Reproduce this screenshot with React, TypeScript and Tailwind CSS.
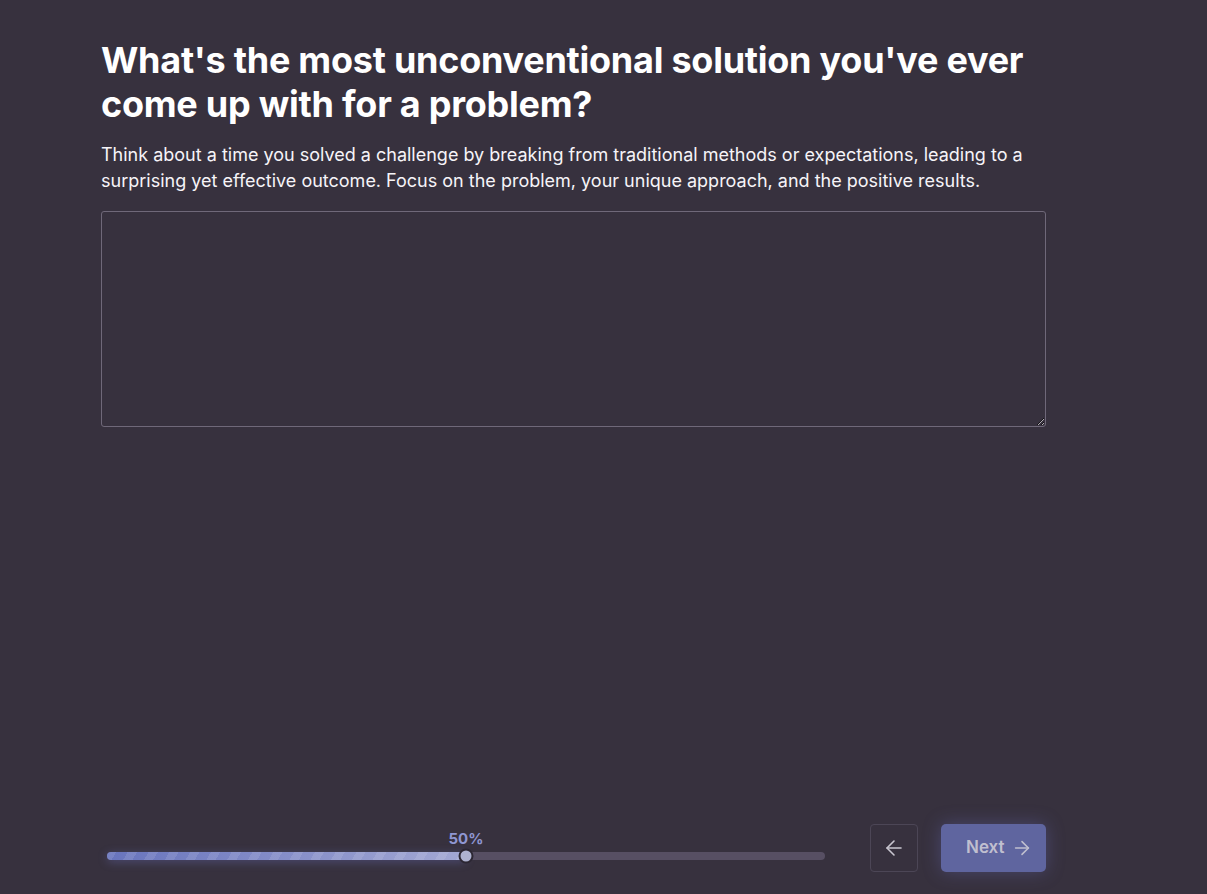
import { ArrowLeft, ArrowRight } from "lucide-react";

export default function App() {
  const progress = 50;

  return (
    <div
      className="flex min-h-screen flex-col bg-[#37313e] text-white"
      style={{ fontFamily: "Inter, 'Noto Sans', sans-serif" }}
    >
      {/* Question */}
      <div className="ml-[101px] w-[945px] pt-[38px]">
        <h1 className="text-[36px] font-bold leading-[44px] tracking-[-0.25px] text-white">
          What's the most unconventional solution you've ever come up with for a problem?
        </h1>
        <p className="mt-[16px] text-[18px] leading-[26px] text-[#f6f4f8]">
          Think about a time you solved a challenge by breaking from traditional methods or
          expectations, leading to a surprising yet effective outcome. Focus on the problem, your
          unique approach, and the positive results.
        </p>
        <textarea
          className="mt-[17px] block h-[216px] w-full resize-y rounded-[3px] border border-[#6f6879] bg-transparent p-3 text-[16px] text-white outline-none"
        />
      </div>

      <div className="flex-1" />

      {/* Footer */}
      <div className="mb-[22px] ml-[101px] flex w-[945px] items-end">
        <div className="relative ml-[6px] w-[718px] pb-[12px]">
          <div className="relative h-[8px] w-full rounded-full bg-[#574f63]">
            <div
              className="absolute inset-y-0 left-0 rounded-full bg-[linear-gradient(90deg,#6874bd,#a3a8d4)] shadow-[0_2px_10px_rgba(120,130,220,0.35)]"
              style={{ width: `${progress}%` }}
            >
              <div className="h-full w-full rounded-full bg-[repeating-linear-gradient(120deg,rgba(255,255,255,0.1)_0px,rgba(255,255,255,0.1)_8px,transparent_8px,transparent_18px)]" />
            </div>
            <div
              className="absolute top-1/2 h-[15px] w-[15px] -translate-x-1/2 -translate-y-1/2 rounded-full border-[2px] border-[#2c2733] bg-[#aeb2d0]"
              style={{ left: `${progress}%` }}
            />
            <span
              className="absolute bottom-[10px] -translate-x-1/2 text-[15px] font-bold text-[#8f96d2]"
              style={{ left: `${progress}%` }}
            >
              {progress}%
            </span>
          </div>
        </div>

        <button className="ml-[45px] flex h-[48px] w-[48px] items-center justify-center rounded-[4px] border border-[#4c4656] text-[#c9c6d0]">
          <ArrowLeft className="h-[24px] w-[24px]" strokeWidth={1.6} />
        </button>
        <button className="ml-[23px] flex h-[48px] w-[105px] items-center gap-[6px] rounded-[5px] bg-[#5f659f] pl-[25px] text-[17px] font-semibold text-[#c0bfcf] shadow-[0_0_18px_rgba(110,115,200,0.35)]">
          Next
          <ArrowRight className="h-[22px] w-[22px]" strokeWidth={1.7} />
        </button>
      </div>
    </div>
  );
}
